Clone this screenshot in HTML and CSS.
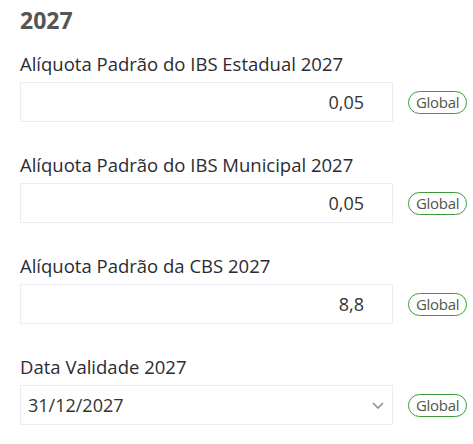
FILE: index.html
```html
<!DOCTYPE html>
<html lang="pt-BR">
<head>
    <meta charset="UTF-8">
    <title>Alíquotas 2027</title>
    <meta name="viewport" content="width=device-width, initial-scale=1">
    <link rel="stylesheet" href="styles.css">
</head>
<body>
    <div class="panel">
        <h3 class="year">2027</h3>

        <div class="field">
            <label>Alíquota Padrão do IBS Estadual 2027</label>
            <div class="row">
                <input class="box num" type="text" value="0,05">
                <span class="badge">Global</span>
            </div>
        </div>

        <div class="field">
            <label>Alíquota Padrão do IBS Municipal 2027</label>
            <div class="row">
                <input class="box num" type="text" value="0,05">
                <span class="badge">Global</span>
            </div>
        </div>

        <div class="field">
            <label>Alíquota Padrão da CBS 2027</label>
            <div class="row">
                <input class="box num" type="text" value="8,8">
                <span class="badge">Global</span>
            </div>
        </div>

        <div class="field">
            <label>Data Validade 2027</label>
            <div class="row">
                <div class="box select">
                    <span>31/12/2027</span>
                    <svg width="12" height="7" viewBox="0 0 12 7"><path d="M1 1l5 5 5-5" fill="none" stroke="#8a8a8a" stroke-width="1.5"/></svg>
                </div>
                <span class="badge">Global</span>
            </div>
        </div>
    </div>
</body>
</html>
```

FILE: styles.css
```css
body { margin: 0; background: #fff; font-family: "Open Sans", "Noto Sans", sans-serif; color: #333; }
.panel { padding: 5px 20px 0; }
.year { margin: 0 0 17px; font-size: 23px; line-height: 30px; font-weight: 700; color: #555; }
.field { margin-bottom: 31px; }
.field label { display: block; font-size: 18.5px; line-height: 24px; color: #2b2b33; margin-bottom: 6px; white-space: nowrap; }
.row { display: flex; align-items: center; gap: 15px; }
.box { flex-shrink: 0; box-sizing: border-box; width: 373px; height: 40px; border: 1px solid #ebebf3; background: #fff; font-family: inherit; font-size: 18px; color: #333; outline: none; }
.num { text-align: right; padding: 0 28px 0 8px; }
.select { display: flex; align-items: center; justify-content: space-between; padding: 0 8px 0 7px; }
.badge { flex-shrink: 0; box-sizing: border-box; height: 23px; padding: 0 7px; border: 1.5px solid #3b9b3b; border-radius: 12px; font-size: 15px; line-height: 20px; letter-spacing: -0.3px; color: #4f5748; }
```
